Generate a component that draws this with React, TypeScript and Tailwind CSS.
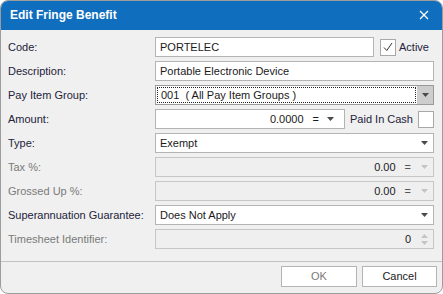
import React from "react";

const font = { fontFamily: '"Liberation Sans", Arial, sans-serif' };

function Arrow({ light }: { light?: boolean }) {
  return (
    <svg width="7" height="4" viewBox="0 0 7 4" className="shrink-0">
      <path d="M0 0 H7 L3.5 4 Z" fill={light ? "#c4c4c4" : "#4a4a4a"} />
    </svg>
  );
}

function Label({ children, disabled }: { children: React.ReactNode; disabled?: boolean }) {
  return (
    <div className={`w-[147px] shrink-0 whitespace-nowrap text-[11px] leading-[20px] ${disabled ? "text-[#7a7a7a]" : "text-[#23233b]"}`}>
      {children}
    </div>
  );
}

function Row({ children }: { children: React.ReactNode }) {
  return <div className="flex h-[20px] items-center whitespace-nowrap">{children}</div>;
}

export default function App() {
  return (
    <div className="w-[443px] h-[294px] bg-[#f0f0f0] rounded-t-[8px] rounded-b-[8px] border border-[#9c9c9c] overflow-hidden flex flex-col" style={font}>
      <div className="h-[30px] shrink-0 bg-[#106ebe] flex items-center justify-between pl-[10px] pr-[14px] -mx-px -mt-px">
        <span className="text-white font-bold text-[12px]">Edit Fringe Benefit</span>
        <svg width="10" height="10" viewBox="0 0 10 10">
          <path d="M1 1 L9 9 M9 1 L1 9" stroke="white" strokeWidth="1.3" />
        </svg>
      </div>
      <div className="flex flex-col gap-[4px] pl-[7px] pr-[8px] pt-[7px]">
        <Row>
          <Label>Code:</Label>
          <div className="w-[219px] h-[20px] bg-white border border-[#b4b4b4] pl-[4px] text-[11px] leading-[18px] text-[#1a1a1a]">PORTELEC</div>
          <div className="ml-[6px] w-[16px] h-[17px] bg-white border border-[#a8a8a8] flex items-center justify-center">
            <svg width="10" height="10" viewBox="0 0 10 10">
              <path d="M1 5.5 L3.8 8.5 L9 1" stroke="#333" strokeWidth="1" fill="none" />
            </svg>
          </div>
          <span className="ml-[3px] text-[11px] text-[#23233b]">Active</span>
        </Row>
        <Row>
          <Label>Description:</Label>
          <div className="flex-1 h-[20px] bg-white border border-[#b4b4b4] pl-[4px] text-[11px] leading-[18px] text-[#1a1a1a]">Portable Electronic Device</div>
        </Row>
        <Row>
          <Label>Pay Item Group:</Label>
          <div className="flex-1 h-[20px] bg-white border border-[#9a9a9a] flex">
            <div className="flex-1 m-[1px] border border-dotted border-[#222] pl-[3px] text-[11px] leading-[14px] text-[#1a1a1a]">001&nbsp; ( All Pay Item Groups )</div>
            <div className="w-[16px] bg-[#cdcdcd] flex items-center justify-center">
              <Arrow />
            </div>
          </div>
        </Row>
        <Row>
          <Label>Amount:</Label>
          <div className="w-[190px] h-[20px] bg-white border border-[#b4b4b4] flex items-center justify-end pr-[10px] text-[11px] text-[#1a1a1a]">
            <span>0.0000</span>
            <span className="ml-[9px]">=</span>
            <span className="ml-[8px]"><Arrow /></span>
          </div>
          <span className="ml-[5px] text-[11px] text-[#23233b]">Paid In Cash</span>
          <div className="ml-auto w-[16px] h-[17px] bg-white border border-[#a8a8a8]" />
        </Row>
        <Row>
          <Label>Type:</Label>
          <div className="flex-1 h-[20px] bg-white border border-[#b4b4b4] flex items-center pl-[4px] pr-[5px] text-[11px] text-[#1a1a1a]">
            <span className="flex-1">Exempt</span>
            <Arrow />
          </div>
        </Row>
        <Row>
          <Label disabled>Tax %:</Label>
          <div className="flex-1 h-[20px] bg-[#efefef] border border-[#c6c6c6] flex items-center justify-end pr-[5px] text-[11px] text-[#1a1a1a]">
            <span>0.00</span>
            <span className="ml-[9px] text-[#555]">=</span>
            <span className="ml-[10px]"><Arrow light /></span>
          </div>
        </Row>
        <Row>
          <Label disabled>Grossed Up %:</Label>
          <div className="flex-1 h-[20px] bg-[#efefef] border border-[#c6c6c6] flex items-center justify-end pr-[5px] text-[11px] text-[#1a1a1a]">
            <span>0.00</span>
            <span className="ml-[9px] text-[#555]">=</span>
            <span className="ml-[10px]"><Arrow light /></span>
          </div>
        </Row>
        <Row>
          <Label>Superannuation Guarantee:</Label>
          <div className="flex-1 h-[20px] bg-white border border-[#b4b4b4] flex items-center pl-[4px] pr-[5px] text-[11px] text-[#1a1a1a]">
            <span className="flex-1">Does Not Apply</span>
            <Arrow />
          </div>
        </Row>
        <Row>
          <Label disabled>Timesheet Identifier:</Label>
          <div className="flex-1 h-[20px] bg-[#efefef] border border-[#c6c6c6] flex items-center justify-end pr-[5px] text-[11px] text-[#1a1a1a]">
            <span>0</span>
            <span className="ml-[10px] flex flex-col gap-[3px]">
              <svg width="7" height="4" viewBox="0 0 7 4"><path d="M0 4 H7 L3.5 0 Z" fill="#c4c4c4" /></svg>
              <svg width="7" height="4" viewBox="0 0 7 4"><path d="M0 0 H7 L3.5 4 Z" fill="#c4c4c4" /></svg>
            </span>
          </div>
        </Row>
      </div>
      <div className="mt-[12px] border-t border-[#c2c2c2] flex justify-end gap-[5px] pt-[4px] pr-[5px]">
        <div className="w-[76px] h-[21px] bg-white border border-[#b4b4b4] flex items-center justify-center text-[11px] text-[#7a7a7a]">OK</div>
        <div className="w-[75px] h-[21px] bg-white border border-[#b4b4b4] flex items-center justify-center text-[11px] text-[#1a1a1a]">Cancel</div>
      </div>
    </div>
  );
}
